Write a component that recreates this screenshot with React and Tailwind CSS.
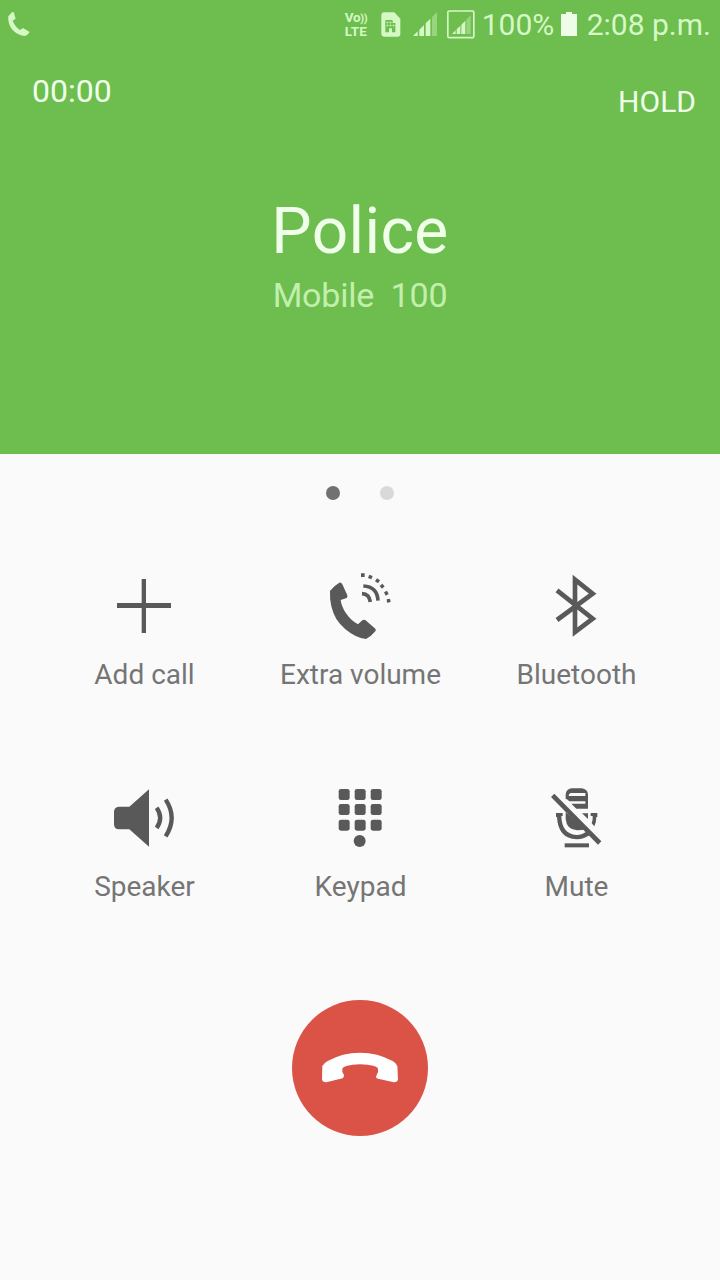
import { useState } from 'react';

const AddCallIcon = () => (
    <svg viewBox="-3 0 270 270" className="size-[90px]" fill="#595959">
        <path d="M125 57h13v72h75v15h-75v75h-13v-75H51v-15h74z" />
    </svg>
);

const ExtraVolumeIcon = () => (
    <svg viewBox="0 0 270 270" className="size-[90px]" fill="#595959">
        <path d="M45 93 Q58 76 73 68 Q79 67 82 73 L97 106 Q98 112 95 114 L77 120 Q79 139 93 160 Q109 183 129 193 L142 181 Q146 178 151 180 L181 206 Q184 210 181 214 Q169 229 153 237 Q139 236 122 228 Q85 209 64 177 Q43 140 45 93z" />
        <g fill="none" stroke="#595959" strokeWidth="11">
            <path d="M141 101 Q163 102 166 126" />
            <path d="M145 78 Q187 80 189 122" />
        </g>
        <path d="M138 40h11v11h-11zM163 44l10 4-4 10-10-4zM186 55l9 6-6 9-9-6zM202 71l7 8-8 7-7-8zM216 92l5 10-9 5-5-10zM215 118l10-2 2 10-11 2z" />
    </svg>
);

const BluetoothIcon = () => (
    <svg viewBox="-12 0 270 270" className="size-[90px]" fill="none" stroke="#595959" strokeWidth="14">
        <path d="M66 91 L173 176 L120 216 V59 L173 101 L66 180" />
    </svg>
);

const SpeakerIcon = () => (
    <svg viewBox="-3 0 270 270" className="size-[90px]" fill="#595959">
        <path d="M147 43V215L88 163H56Q43 161 42 149V109Q43 97 56 95H88z" />
        <g fill="none" stroke="#595959" strokeWidth="13">
            <path d="M170 98 Q191 128 170 159" />
            <path d="M197 74 Q233 128 197 184" />
        </g>
    </svg>
);

const KeypadIcon = () => (
    <svg viewBox="0 0 270 270" className="size-[90px]" fill="#595959">
        {[42, 87, 134].map((y) =>
            [71, 119, 167].map((x) => (
                <rect key={`${x}-${y}`} x={x} y={y} width="33" height="33" rx="7" />
            ))
        )}
        <circle cx="134" cy="198" r="18" />
    </svg>
);

const MuteIcon = () => (
    <svg viewBox="-12 0 270 270" className="size-[90px]" fill="#595959">
        {/* Capsule with grille lines */}
        <path
            fillRule="evenodd"
            d="M92 72V58Q94 41 111 40H140Q158 42 159 59V101H124L109 86H151V79H103L96 73zM107 54Q101 56 101 63H151V54z"
        />
        <path d="M141 115H159V132z" />
        <path d="M92 112 L151 162 Q143 166 126 166 Q95 164 92 132z" />
        {/* Holder */}
        <path d="M63 114H83V123H79Q80 176 124 180Q143 180 156 168L167 178Q149 193 124 193Q69 190 66 126H63z" />
        <path d="M167 114H187V126H184Q184 142 178 154L170 145Q174 135 173 123H167z" />
        <path d="M58 56L199 199L189 209L48 66z" />
        <path d="M89 205h73v12H89z" />
    </svg>
);

const actionRows = [
    [
        { label: 'Add call', Icon: AddCallIcon },
        { label: 'Extra volume', Icon: ExtraVolumeIcon },
        { label: 'Bluetooth', Icon: BluetoothIcon },
    ],
    [
        { label: 'Speaker', Icon: SpeakerIcon },
        { label: 'Keypad', Icon: KeypadIcon },
        { label: 'Mute', Icon: MuteIcon },
    ],
];

function StatusBar() {
    return (
        <div className="flex h-[50px] items-center justify-between pl-2 pr-[9px] text-[#d6f8c5]">
            <svg viewBox="24 36 66 72" className="mb-0.5 h-6 w-[22px]" fill="currentColor">
                <path d="M25 49L36 37L41 36L47 56L38 62Q44 79 60 90L69 84L89 96Q83 106 74 108Q50 105 36 88Q23 70 25 49z" />
            </svg>
            <div className="flex items-center">
                <div className="mb-0.5 flex w-6 flex-col text-[13.5px] font-bold leading-[13px]">
                    <span className="whitespace-nowrap tracking-[-0.3px]">
                        Vo<span className="text-[11px]">))</span>
                    </span>
                    <span className="tracking-[0.2px]">LTE</span>
                </div>
                <svg viewBox="137 35 60 75" className="mb-0.5 ml-[12px] h-[25px] w-5" fill="currentColor">
                    <path fillRule="evenodd" d="M146 36H177L195 55V101Q195 109 187 109H145Q138 108 138 101V45Q138 37 146 36zM150 59V96H161V84H170V96H180V68H172V59z" />
                    <path d="M154 64h5v5h-5zM163 64h5v5h-5zM154 73h5v5h-5zM163 73h5v5h-5zM172 73h5v5h-5z" />
                </svg>
                <svg viewBox="234 36 72 72" className="mb-0.5 ml-[12px] size-6" fill="currentColor">
                    <path d="M234 108L248 94V108zM253 89L267 75V108H253zM272 70L286 56V108H272z" />
                    <path d="M291 51L306 36V108H291z" opacity=".4" />
                </svg>
                <svg viewBox="335 29 84 87" className="mb-0.5 ml-[10px] h-[29px] w-7" fill="currentColor">
                    <rect x="337.500" y="32" width="78" height="80" rx="4" fill="none" stroke="currentColor" strokeWidth="5" />
                    <path d="M350 101L361 90V101zM364 87L375 76V101H364zM378 73L390 61V101H378z" />
                    <path d="M393 58L406 45V101H393z" opacity=".4" />
                </svg>
                <span className="ml-[7px] w-[73px] whitespace-nowrap text-[30px] leading-[50px]">100%</span>
                <svg viewBox="0 0 16 24" className="mb-0.5 ml-[6px] h-6 w-4" fill="#eefce8">
                    <path d="M5 0h6v2h5v22H0V2h5z" />
                </svg>
                <span className="ml-[10px] whitespace-nowrap text-[30px] leading-[50px]">2:08 p.m.</span>
            </div>
        </div>
    );
}

export default function App() {
    const [page, setPage] = useState(0);

    return (
        <div className="flex h-[1280px] w-[720px] flex-col overflow-hidden bg-[#fafafa] font-[Roboto,sans-serif]">
            <header className="h-[454px] bg-[#6dbe4f]">
                <StatusBar />
                <div className="flex justify-between pl-8 pr-6 text-[#f0ffe9]">
                    <span className="pt-[21px] text-[32px] leading-10">00:00</span>
                    <button className="pt-8 text-[30px] leading-10">HOLD</button>
                </div>
                <div className="mt-[70px] flex flex-col items-center">
                    <h1 className="text-[64px] leading-[80px] tracking-[0.4px] text-[#f0ffe9]">Police</h1>
                    <p className="mt-[2px] whitespace-pre text-[34px] leading-[42px] tracking-[-0.2px] text-[#c3efad]">Mobile  100</p>
                </div>
            </header>

            {/* Page dots */}
            <div className="mt-8 flex justify-center gap-10">
                {[0, 1].map((i) => (
                    <button
                        key={i}
                        onClick={() => setPage(i)}
                        aria-label={`Page ${i + 1}`}
                        className={`size-[14px] rounded-full ${page === i ? 'bg-[#717171]' : 'bg-[#d9d9d9]'}`}
                    />
                ))}
            </div>

            <div className="mt-[60px] flex flex-col gap-[82px] px-9">
                {actionRows.map((row, i) => (
                    <div key={i} className="grid grid-cols-3">
                        {row.map(({ label, Icon }) => (
                            <button key={label} className="flex flex-col items-center text-[#757575]">
                                <Icon />
                                <span
                                    className={`whitespace-nowrap pl-px text-[28px] leading-9 ${i === 0 ? 'mt-[7px]' : 'mt-[4px]'}`}
                                >
                                    {label}
                                </span>
                            </button>
                        ))}
                    </div>
                ))}
            </div>

            <button aria-label="End call" className="mx-auto mt-[95px] size-[136px] rounded-full bg-[#db5247]">
                <svg viewBox="21 30 408 408" className="size-[136px]" fill="#fff">
                    <path d="M112 228Q116 220 128 213Q172 188 225 188Q278 188 323 213Q335 220 337 228L339 268Q338 277 327 277L279 266Q271 264 274 257L279 246V236Q275 225 225 223Q177 225 172 236V246L177 255Q178 261 173 265L124 277Q112 277 111 268z" />
                </svg>
            </button>
        </div>
    );
}
